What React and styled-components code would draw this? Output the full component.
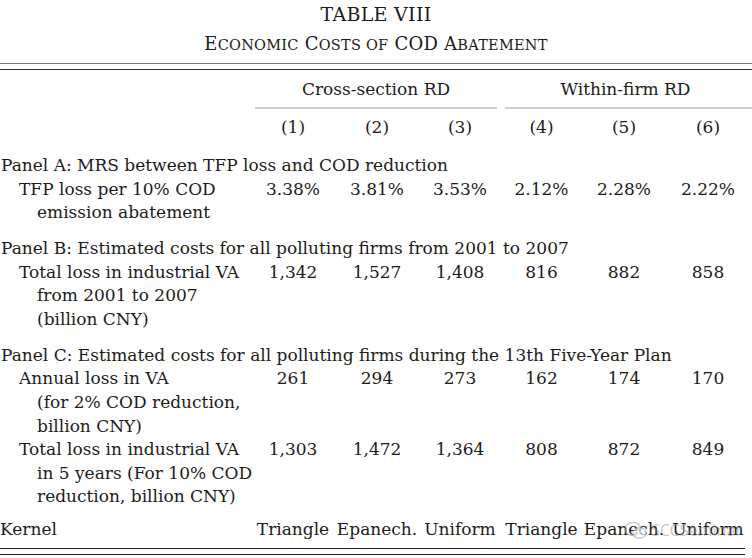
import React from "react";
import styled, { createGlobalStyle } from "styled-components";

const Global = createGlobalStyle`
  html, body { margin: 0; padding: 0; background: #ffffff; }
  body { font-family: "DejaVu Serif", "Liberation Serif", serif; color: #1c1c1c; }
`;

const Page = styled.div`
  width: 752px;
  height: 558px;
  overflow: hidden;
  padding-top: 1px;
  box-sizing: border-box;
  display: flex;
  flex-direction: column;
`;

const Title = styled.div`
  font-size: 19px;
  line-height: 24px;
  text-align: center;
  letter-spacing: 0.3px;
  margin-top: 1px;
`;

const Subtitle = styled.div`
  font-size: 18px;
  line-height: 24px;
  text-align: center;
  letter-spacing: 0.25px;
  margin-top: 6px;
`;

const Small = styled.span`
  font-size: 14.5px;
  text-transform: uppercase;
`;

const Rule = styled.div`
  width: ${(p) => p.$w || "752px"};
  height: 1px;
  background: ${(p) => p.$c || "#333"};
  margin-top: ${(p) => p.$mt || 0}px;
`;

const Grid = styled.div`
  display: grid;
  grid-template-columns: 251px 84px 84px 82px 81px 84px 84px;
  font-size: 17px;
  line-height: 23.6px;
  margin-top: ${(p) => p.$mt || 0}px;
`;

const GroupHead = styled.div`
  grid-column: ${(p) => p.$span};
  text-align: center;
  white-space: nowrap;
`;

const GroupRule = styled.div`
  grid-column: ${(p) => p.$span};
  height: 2px;
  background: #cfcfcf;
  margin: 5px ${(p) => p.$mr ?? 4}px 0 4px;
`;

const Cell = styled.div`
  text-align: center;
  white-space: nowrap;
`;

const Label = styled.div`
  white-space: nowrap;
  padding-left: ${(p) => p.$indent || 0}px;
`;

const Cont = styled.div`
  padding-left: 18px;
`;

const PanelTitle = styled.div`
  grid-column: 1 / -1;
  white-space: nowrap;
  padding-left: 1px;
`;

const KernelRow = styled(Grid)`
  position: relative;
`;

const Watermark = styled.div`
  position: absolute;
  left: 624px;
  top: 1px;
  display: flex;
  align-items: center;
  gap: 3px;
  font-family: "Noto Sans", "DejaVu Sans", sans-serif;
  font-size: 16px;
  color: rgba(150, 150, 150, 0.5);
  pointer-events: none;
`;

const cols = [
  { pct: "3.38%", b: "1,342", a: "261", t: "1,303", k: "Triangle" },
  { pct: "3.81%", b: "1,527", a: "294", t: "1,472", k: "Epanech." },
  { pct: "3.53%", b: "1,408", a: "273", t: "1,364", k: "Uniform" },
  { pct: "2.12%", b: "816", a: "162", t: "808", k: "Triangle" },
  { pct: "2.28%", b: "882", a: "174", t: "872", k: "Epanech." },
  { pct: "2.22%", b: "858", a: "170", t: "849", k: "Uniform" },
];

function DataRow({ label, cont, field }) {
  return (
    <>
      <Label $indent={19}>
        {label}
        {cont.map((c) => (
          <Cont key={c}>{c}</Cont>
        ))}
      </Label>
      {cols.map((c, i) => (
        <Cell key={i}>{c[field]}</Cell>
      ))}
    </>
  );
}

export default function App() {
  return (
    <>
      <Global />
      <Page>
        <Title>TABLE VIII</Title>
        <Subtitle>
          E<Small>conomic</Small> C<Small>osts of</Small> COD A<Small>batement</Small>
        </Subtitle>
        <Rule $c="#7a7a7a" $mt={6} />
        <Rule $c="#2e2e2e" $mt={5} />

        <Grid $mt={8}>
          <div />
          <GroupHead $span="2 / 5">Cross-section RD</GroupHead>
          <GroupHead $span="5 / 8">Within-firm RD</GroupHead>
          <GroupRule $span="2 / 5" />
          <GroupRule $span="5 / 8" $mr={-2} />
        </Grid>

        <Grid $mt={7}>
          <div />
          {[1, 2, 3, 4, 5, 6].map((n) => (
            <Cell key={n}>({n})</Cell>
          ))}
        </Grid>

        <Grid $mt={15}>
          <PanelTitle>Panel A: MRS between TFP loss and COD reduction</PanelTitle>
          <DataRow label="TFP loss per 10% COD" cont={["emission abatement"]} field="pct" />
        </Grid>

        <Grid $mt={12}>
          <PanelTitle>Panel B: Estimated costs for all polluting firms from 2001 to 2007</PanelTitle>
          <DataRow
            label="Total loss in industrial VA"
            cont={["from 2001 to 2007", "(billion CNY)"]}
            field="b"
          />
        </Grid>

        <Grid $mt={12.5}>
          <PanelTitle>
            Panel C: Estimated costs for all polluting firms during the 13th Five-Year Plan
          </PanelTitle>
          <DataRow
            label="Annual loss in VA"
            cont={["(for 2% COD reduction,", "billion CNY)"]}
            field="a"
          />
          <DataRow
            label="Total loss in industrial VA"
            cont={["in 5 years (For 10% COD", "reduction, billion CNY)"]}
            field="t"
          />
        </Grid>

        <KernelRow $mt={9}>
          <Label>Kernel</Label>
          {cols.map((c, i) => (
            <Cell key={i}>{c.k}</Cell>
          ))}
          <Watermark>
            <svg width="24" height="20" viewBox="0 0 24 20" aria-hidden="true">
              <ellipse cx="9" cy="8" rx="8" ry="6.5" fill="none" stroke="rgba(160,160,160,0.55)" strokeWidth="1.4" />
              <ellipse cx="15.5" cy="12" rx="6.5" ry="5.2" fill="rgba(255,255,255,0.6)" stroke="rgba(160,160,160,0.55)" strokeWidth="1.4" />
            </svg>
            SCCSeminar
          </Watermark>
        </KernelRow>

        <Rule $c="#222" $w="745px" $mt={6} />
        <Rule $c="#222" $w="745px" $mt={5} />
      </Page>
    </>
  );
}
